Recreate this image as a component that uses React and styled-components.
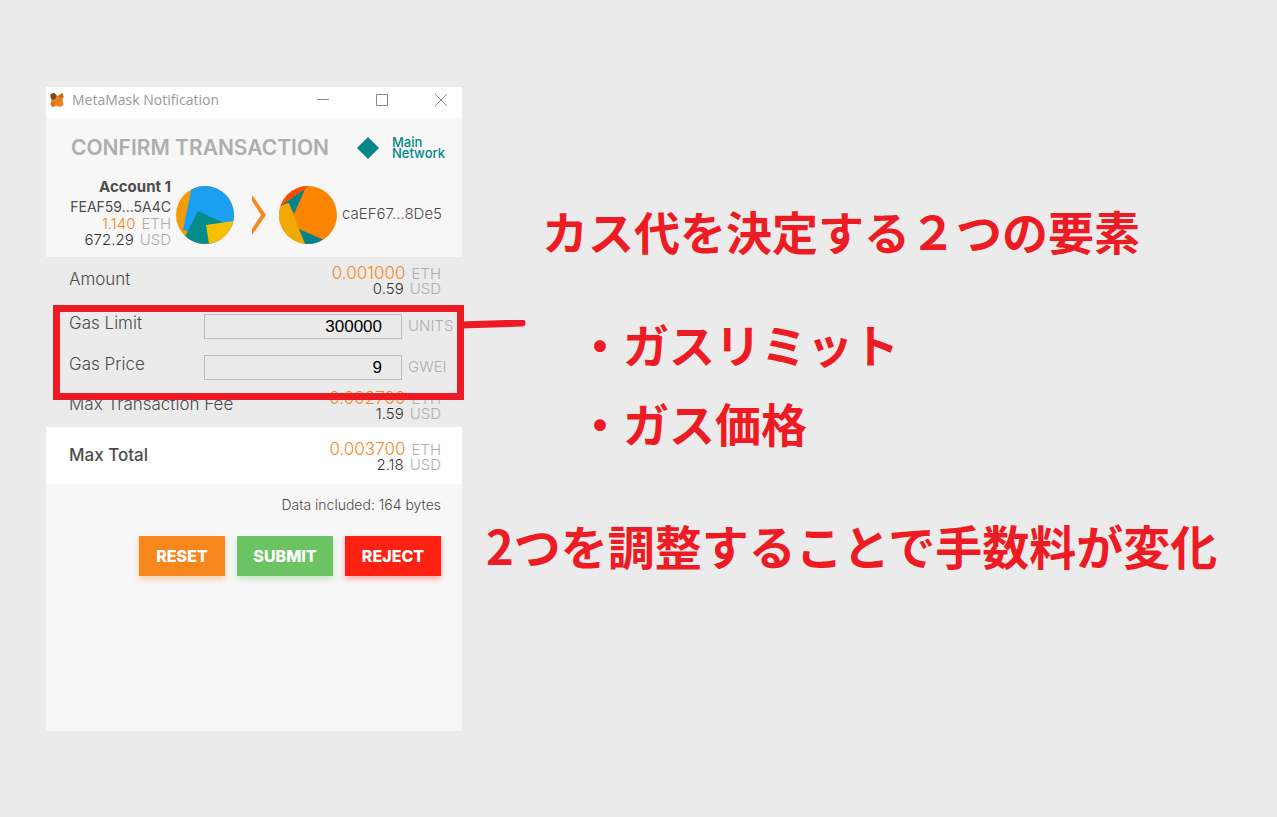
import React from "react";
import styled, { createGlobalStyle } from "styled-components";

const GlobalStyle = createGlobalStyle`
  * { box-sizing: border-box; }
  body {
    margin: 0;
    background: #ebebeb;
    color: #4d4d4d;
    font-family: Inter, "Liberation Sans", sans-serif;
  }
`;

const Page = styled.main`
  display: flex;
  align-items: flex-start;
  gap: 24px;
  min-height: 100vh;
  padding: 87px 46px;
`;

const Popup = styled.section`
  flex: 0 0 416px;
  min-width: 0;
  min-height: 644px;
  background: #f7f7f7;
`;

const TitleBar = styled.header`
  display: flex;
  align-items: center;
  height: 31px;
  padding: 0 14px 6px 3px;
  background: #fff;
`;

const WindowTitle = styled.span`
  flex: 1;
  margin-left: 7px;
  color: #999;
  font: 400 14px/24px "Open Sans", sans-serif;
`;

const WindowControls = styled.div`
  display: flex;
  gap: 45px;
`;

const WindowButton = styled.button`
  display: flex;
  width: 14px;
  height: 14px;
  padding: 0;
  border: 0;
  background: none;
`;

const Heading = styled.div`
  display: flex;
  align-items: center;
  height: 59px;
  padding: 0 17px 0 25px;
`;

const Title = styled.h1`
  flex: 1;
  margin: 0;
  color: #aeaeae;
  font-size: 21px;
  font-weight: 600;
  line-height: 24px;
  white-space: nowrap;
`;

const Network = styled.div`
  display: flex;
  align-items: center;
  gap: 13px;
  color: #038789;
  font-size: 13px;
  font-weight: 500;
  line-height: 11px;
`;

const Accounts = styled.div`
  display: flex;
  height: 80px;
  padding: 0 20px 0 23px;
`;

const Sender = styled.div`
  flex: 0 0 102px;
  display: flex;
  flex-direction: column;
  align-items: flex-end;
  white-space: nowrap;
`;

const AccountName = styled.div`
  font-size: 15px;
  font-weight: 700;
  line-height: 20px;
`;

const Address = styled.div`
  font-size: ${(p) => (p.$compact ? 14 : 15)}px;
  font-weight: ${(p) => (p.$compact ? 400 : 300)};
  line-height: 19px;
`;

const Transfer = styled.div`
  flex: 1;
  display: flex;
  align-items: center;
  min-width: 0;
  height: 58px;
  margin: 9px 0 0 5px;

  ${Address} {
    margin-left: 5px;
    padding-bottom: 3px;
  }
`;

const Arrow = styled.svg`
  flex: none;
  margin: 0 13px 0 18px;
`;

const AmountLine = styled.div`
  height: 16px;
  color: #333;
  font-size: 15px;
  font-weight: 300;
  line-height: 16px;
  text-align: right;
`;

const Ether = styled.span`
  color: #f7861c;
  font-size: ${(p) => (p.$small ? 15 : 17)}px;
`;

const Unit = styled.span`
  margin-left: 6px;
  color: #aeaeae;
`;

const Details = styled.div`
  position: relative;
  padding: 8px 21px 5px 23px;
  background: #ebebeb;
`;

const Row = styled.div`
  display: flex;
  justify-content: space-between;
`;

const RowLabel = styled.div`
  font-size: 17px;
  font-weight: ${(p) => (p.$strong ? 500 : 300)};
  line-height: 28px;
`;

const GasFields = styled.div`
  display: grid;
  gap: 16px;
  margin: 17px 0 10px;
`;

const GasRow = styled.div`
  display: flex;
  height: 25px;
`;

const GasLabel = styled.label`
  flex: 1;
  font-size: 17px;
  font-weight: 300;
  line-height: 18px;
`;

const GasInput = styled.input`
  width: 198px;
  height: 25px;
  padding: 0 19px 0 8px;
  border: 1px solid #bdbdbd;
  border-radius: 0;
  background: #ebebeb;
  color: #000;
  font: 17px "Liberation Sans", Arial, sans-serif;
  text-align: right;
`;

const GasUnit = styled.span`
  width: 39px;
  padding-left: 6px;
  color: #aeaeae;
  font-size: 15px;
  font-weight: 300;
  line-height: 24px;
  white-space: nowrap;
`;

const Marker = styled.div`
  position: absolute;
  top: 48px;
  left: 7px;
  right: -2px;
  height: 95px;
  border: 7px solid #ed1c24;
  pointer-events: none;
`;

const MarkerTail = styled.svg`
  position: absolute;
  top: 8px;
  left: 100%;
`;

const Total = styled(Row)`
  padding: 14px 21px 11px 23px;
  background: #fff;
`;

const DataNote = styled.p`
  margin: 0;
  padding: 11px 21px 0;
  font-size: 14px;
  font-weight: 300;
  line-height: 20px;
  text-align: right;
`;

const Actions = styled.div`
  display: flex;
  justify-content: flex-end;
  gap: 12px;
  padding: 21px 21px 0;
`;

const ActionButton = styled.button`
  width: ${(p) => (p.$narrow ? 86 : 96)}px;
  height: 40px;
  padding: 0;
  border: 0;
  background: ${(p) => p.$color};
  box-shadow: 0 3px 6px ${(p) => p.$color}5c;
  color: #fff;
  font: 800 16px/20px Inter, sans-serif;
`;

const Notes = styled.section`
  flex: 1;
  min-width: 0;
  padding-top: 115px;
  color: #ed1c24;
  font: 700 46px/56px "Noto Sans CJK JP", sans-serif;
  white-space: nowrap;
`;

const NoteTitle = styled.h2`
  margin: 0 0 57px 56px;
  font: inherit;
`;

const NoteList = styled.ul`
  display: grid;
  gap: 23px;
  margin: 0 0 67px 91px;
  padding: 0;
  list-style: none;
`;

const NoteSummary = styled.p`
  margin: 0;
  font-size: 47px;
`;

function Fox() {
  return (
    <svg width="16" height="16" viewBox="0 0 15 16" aria-hidden="true">
      <path d="M1 2l4-1 3 3 5-3 1 4-1 3 1 5-3 2-4-1-4 1-2-3 1-5z" fill="#ee8420" />
      <path d="M1 2l4-1 2 3-1 3-3 1-2-2z" fill="#7a4a26" />
      <path d="M9 4l4-3 1 4-3 1z" fill="#c4671c" />
      <path d="M1 12l3-2 1 4-2 1z" fill="#d9711b" />
      <path d="M5 10l1 1M10 9l1-1" stroke="#8b5526" />
    </svg>
  );
}

function SenderIcon() {
  return (
    <svg width="58" height="58" viewBox="0 0 58 58" aria-hidden="true">
      <clipPath id="sender"><circle cx="29" cy="29" r="29" /></clipPath>
      <g clipPath="url(#sender)">
        <path d="M0 0h58v58H0z" fill="#f39c05" />
        <path d="M16 0h42v45H12L7 44z" fill="#1b9ff3" />
        <path d="M22 25l26 12-4 21H12l-3-7z" fill="#038c8a" />
        <path d="M30 39l28-4v23H33z" fill="#f5bf02" />
      </g>
    </svg>
  );
}

function RecipientIcon() {
  return (
    <svg width="58" height="58" viewBox="0 0 58 58" aria-hidden="true">
      <clipPath id="recipient"><circle cx="29" cy="29" r="29" /></clipPath>
      <g clipPath="url(#recipient)">
        <path d="M0 0h58v58H0z" fill="#fb8500" />
        <path d="M0 0h29L26 3 3 20H0z" fill="#fb4c08" />
        <path d="M26 3L15 28 9 17 3 19z" fill="#03838e" />
        <path d="M0 21l10-4 10 26 7 15H0z" fill="#f2aa02" />
        <path d="M20 43l25 11-4 4H26z" fill="#03838e" />
      </g>
    </svg>
  );
}

function Amounts({ eth, usd, small }) {
  return (
    <div>
      <AmountLine><Ether $small={small}>{eth}</Ether><Unit>ETH</Unit></AmountLine>
      <AmountLine>{usd}<Unit>USD</Unit></AmountLine>
    </div>
  );
}

function GasField({ id, label, value, unit }) {
  return (
    <GasRow>
      <GasLabel htmlFor={id}>{label}</GasLabel>
      <GasInput id={id} defaultValue={value} />
      <GasUnit>{unit}</GasUnit>
    </GasRow>
  );
}

export default function App() {
  return (
    <>
      <GlobalStyle />
      <Page>
        <Popup>
          <TitleBar>
            <Fox />
            <WindowTitle>MetaMask Notification</WindowTitle>
            <WindowControls>
              <WindowButton aria-label="Minimize">
                <svg width="14" height="14"><path d="M1 6.5h12" stroke="#888" /></svg>
              </WindowButton>
              <WindowButton aria-label="Maximize">
                <svg width="14" height="14"><path d="M1.5 1.5h11v11h-11z" fill="none" stroke="#888" /></svg>
              </WindowButton>
              <WindowButton aria-label="Close">
                <svg width="14" height="14"><path d="M1 1l12 12M13 1L1 13" stroke="#888" /></svg>
              </WindowButton>
            </WindowControls>
          </TitleBar>
          <Heading>
            <Title>CONFIRM TRANSACTION</Title>
            <Network>
              <svg width="22" height="22" aria-hidden="true"><path d="M11 0l11 11-11 11L0 11z" fill="#038789" /></svg>
              <span>Main<br />Network</span>
            </Network>
          </Heading>
          <Accounts>
            <Sender>
              <AccountName>Account 1</AccountName>
              <Address $compact>FEAF59...5A4C</Address>
              <Amounts small eth="1.140" usd="672.29" />
            </Sender>
            <Transfer>
              <SenderIcon />
              <Arrow width="14" height="40" viewBox="0 0 14 40" aria-hidden="true">
                <path d="M0 0l14 20L0 40v-6l9-14L0 6z" fill="#f7861c" />
              </Arrow>
              <RecipientIcon />
              <Address>caEF67...8De5</Address>
            </Transfer>
          </Accounts>
          <Details>
            <Row>
              <RowLabel>Amount</RowLabel>
              <Amounts eth="0.001000" usd="0.59" />
            </Row>
            <GasFields>
              <GasField id="gas-limit" label="Gas Limit" value="300000" unit="UNITS" />
              <GasField id="gas-price" label="Gas Price" value="9" unit="GWEI" />
            </GasFields>
            <Row>
              <RowLabel>Max Transaction Fee</RowLabel>
              <Amounts eth="0.002700" usd="1.59" />
            </Row>
            <Marker>
              <MarkerTail width="70" height="14" aria-hidden="true">
                <path d="M3 5L65 3" stroke="#ed1c24" strokeWidth="7" strokeLinecap="round" />
              </MarkerTail>
            </Marker>
          </Details>
          <Total>
            <RowLabel $strong>Max Total</RowLabel>
            <Amounts eth="0.003700" usd="2.18" />
          </Total>
          <DataNote>Data included: 164 bytes</DataNote>
          <Actions>
            <ActionButton $narrow $color="#f7861c">RESET</ActionButton>
            <ActionButton $color="#6bc363">SUBMIT</ActionButton>
            <ActionButton $color="#ff2111">REJECT</ActionButton>
          </Actions>
        </Popup>
        <Notes>
          <NoteTitle>カス代を決定する２つの要素</NoteTitle>
          <NoteList>
            <li>・ガスリミット</li>
            <li>・ガス価格</li>
          </NoteList>
          <NoteSummary>2つを調整することで手数料が変化</NoteSummary>
        </Notes>
      </Page>
    </>
  );
}
